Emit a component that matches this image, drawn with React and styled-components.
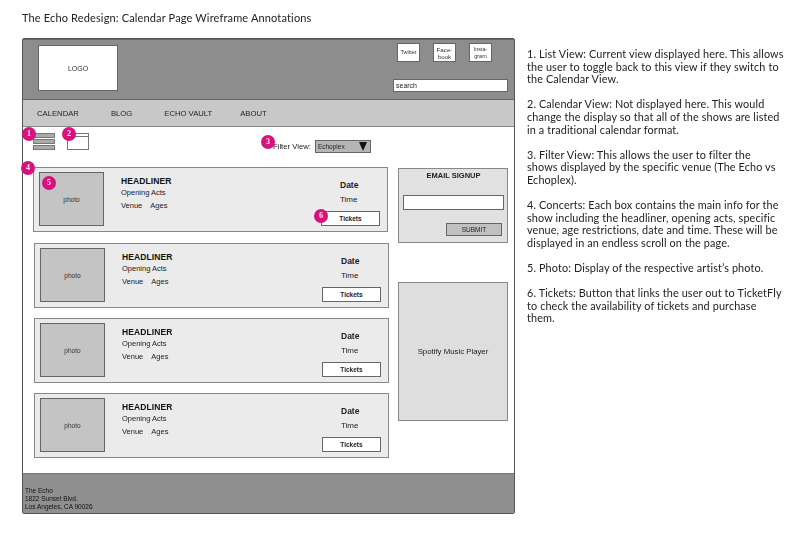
import React from "react";
import styled, { createGlobalStyle } from "styled-components";

const Global = createGlobalStyle`
  html, body { margin: 0; padding: 0; background: #fff; }
  body { width: 800px; height: 538px; overflow: hidden; font-family: "Liberation Sans", Arial, sans-serif; color: #222; }
  * { box-sizing: border-box; }
`;

const Page = styled.div`
  width: 800px; height: 538px;
  display: grid;
  grid-template-columns: 527px 273px;
  grid-template-rows: 38px 1fr;
  filter: blur(0.3px);
  will-change: filter;
`;
const Title = styled.h1`
  grid-column: 1 / 3;
  margin: 0; padding: 11px 0 0 22px;
  font: 400 11px/14px Lato, sans-serif;
  letter-spacing: 0.15px;
  color: #222;
`;
const Frame = styled.div`
  margin-left: 22px;
  width: 493px; height: 476px;
  border: 1px solid #555;
  border-radius: 2px;
  display: flex; flex-direction: column;
  background: #fff;
`;
const Header = styled.header`
  height: 61px;
  background: #8d8d8d;
  border-top: 1px solid #666;
  border-bottom: 1px solid #666;
  padding: 3px 6px 0 15px;
  display: flex; justify-content: space-between;
`;
const Logo = styled.div`
  width: 80px; height: 46px; margin-top: 2px;
  background: #fff;
  border: 1px solid #666;
  display: flex; align-items: center; justify-content: center;
  font-size: 7px; color: #333;
`;
const HeaderRight = styled.div`
  width: 115px;
  display: flex; flex-direction: column; justify-content: space-between;
  padding-bottom: 7px;
`;
const Socials = styled.div`
  display: flex; gap: 13px; padding-left: 4px;
`;
const Social = styled.div`
  width: 23px; height: 19px;
  background: #fff;
  border: 1px solid #666;
  display: flex; align-items: center; justify-content: center; text-align: center;
  font-size: ${p => p.$size || 5.5}px; line-height: 7px; color: #333;
`;
const Search = styled.div`
  height: 13px;
  background: #fff;
  border: 1px solid #666;
  padding-left: 2px;
  font-size: 7px; line-height: 11px; color: #222;
`;
const Nav = styled.nav`
  height: 27px;
  background: #c8c8c8;
  border-bottom: 1px solid #888;
  display: flex; align-items: center;
  padding-left: 14px;
  font-size: 7.7px; color: #222;
`;
const NavItem = styled.span`
  margin-right: ${p => p.$gap}px;
`;
const Main = styled.div`
  flex: 1;
  display: grid;
  grid-template-columns: 365px 1fr;
  grid-template-rows: 40px 1fr;
`;
const Tools = styled.div`
  grid-column: 1 / 3;
  position: relative;
  display: flex; align-items: flex-start;
  padding: 6px 0 0 10px;
`;
const ListIcon = styled.div`
  width: 22px;
  display: flex; flex-direction: column; gap: 1px;
`;
const ListBar = styled.div`
  height: 5px; background: #aaa; border: 1px solid #777;
`;
const CalIcon = styled.div`
  width: 22px; height: 17px; margin-left: 12px;
  border: 1px solid #777; background: #fff;
`;
const CalTop = styled.div`
  height: 3px; border-bottom: 1px solid #777;
`;
const FilterRow = styled.div`
  margin-left: 184px; margin-top: 7px;
  display: flex; align-items: center; gap: 4px;
  font-size: 7.7px; color: #222;
`;
const Select = styled.div`
  width: 56px; height: 13px;
  background: #b5b5b5;
  border: 1px solid #666;
  padding: 0 3px 0 2px;
  display: flex; align-items: center; justify-content: space-between;
  font-size: 6.5px; color: #222;
`;
const Arrow = styled.span`
  width: 0; height: 0;
  border-left: 4px solid transparent;
  border-right: 4px solid transparent;
  border-top: 9px solid #111;
`;
const Cards = styled.div`
  display: flex; flex-direction: column; gap: 10px;
  padding-left: 11px;
`;
const Card = styled.div`
  position: relative;
  width: 355px; height: 65px;
  background: #ebebeb;
  border: 1px solid #888;
  display: flex;
  padding: 4px 0 0 5px;
  &:first-child { margin: 0 0 1px -1px; }
`;
const Photo = styled.div`
  width: 65px; height: 54px;
  background: #c4c4c4;
  border: 1px solid #666;
  display: flex; align-items: center; justify-content: center;
  font-size: 6.5px; color: #333;
`;
const Info = styled.div`
  margin-left: 17px; margin-top: 4px;
  display: flex; flex-direction: column;
  width: 200px;
`;
const Headliner = styled.div`
  font-size: 8.5px; line-height: 11px; font-weight: 700; color: #111; letter-spacing: 0.1px;
`;
const Acts = styled.div`
  font-size: 7.5px; line-height: 11px; color: #222;
`;
const Meta = styled.div`
  font-size: 7.5px; line-height: 11px; margin-top: 2px; color: #222;
  display: flex; gap: 8px;
`;
const Right = styled.div`
  flex: 1;
  display: flex; flex-direction: column; align-items: flex-start;
  padding-top: 8px;
`;
const DateText = styled.div`
  margin-left: 19px;
  font-size: 8.5px; line-height: 11px; font-weight: 700; color: #222;
`;
const TimeText = styled.div`
  margin-left: 19px; margin-top: 3px;
  font-size: 8px; line-height: 11px; color: #222;
`;
const Tickets = styled.div`
  margin-top: 6px;
  width: 59px; height: 15px;
  background: #fff;
  border: 1px solid #666;
  display: flex; align-items: center; justify-content: center;
  font-size: 6.5px; font-weight: 700; color: #222;
`;
const Side = styled.aside`
  display: flex; flex-direction: column; gap: 39px;
  padding-left: 10px; padding-top: 1px;
`;
const Signup = styled.div`
  width: 110px; height: 75px;
  background: #e1e1e1;
  border: 1px solid #888;
  display: flex; flex-direction: column; align-items: center;
  padding: 2px 3px 0 4px;
`;
const SignupTitle = styled.div`
  font-size: 7.5px; line-height: 10px; font-weight: 700; color: #222;
`;
const EmailInput = styled.div`
  width: 101px; height: 15px; margin-top: 14px;
  background: #fff; border: 1px solid #666;
`;
const Submit = styled.div`
  width: 56px; height: 13px; margin-top: 13px; margin-right: 2px;
  align-self: flex-end;
  background: #c0c0c0; border: 1px solid #666;
  display: flex; align-items: center; justify-content: center;
  font-size: 6.5px; color: #222;
`;
const Spotify = styled.div`
  width: 110px; height: 139px;
  background: #dedede;
  border: 1px solid #888;
  display: flex; align-items: center; justify-content: center;
  font-size: 7.8px; color: #222;
`;
const Footer = styled.footer`
  height: 40px;
  background: #8f8f8f;
  border-top: 1px solid #777;
  padding: 13px 0 0 2px;
  font-size: 6.5px; line-height: 7.9px; color: #111;
`;
const Badge = styled.span`
  position: absolute;
  left: ${p => p.$x}px; top: ${p => p.$y}px;
  width: 14px; height: 14px; border-radius: 50%;
  background: #d6127d;
  color: #fbe0ee;
  display: flex; align-items: center; justify-content: center;
  font: 700 8px/1 "Liberation Serif", serif;
`;
const Notes = styled.div`
  padding-top: 10px;
  display: flex; flex-direction: column; gap: 12.6px;
`;
const Note = styled.p`
  margin: 0;
  font: 400 10.85px/12.6px Lato, sans-serif;
  letter-spacing: 0.12px;
  color: #222;
  white-space: pre-line;
`;

const NOTES = [
  "1. List View: Current view displayed here. This allows\nthe user to toggle back to this view if they switch to\nthe Calendar View.",
  "2. Calendar View: Not displayed here. This would\nchange the display so that all of the shows are listed\nin a traditional calendar format.",
  "3. Filter View: This allows the user to filter the\nshows displayed by the specific venue (The Echo vs\nEchoplex).",
  "4. Concerts: Each box contains the main info for the\nshow including the headliner, opening acts, specific\nvenue, age restrictions, date and time. These will be\ndisplayed in an endless scroll on the page.",
  "5. Photo: Display of the respective artist\u2019s photo.",
  "6. Tickets: Button that links the user out to TicketFly\nto check the availability of tickets and purchase\nthem.",
];

function ConcertCard({ first }) {
  return (
    <Card>
      {first && <Badge $x={-13} $y={-7}>4</Badge>}
      {first && <Badge $x={8} $y={8}>5</Badge>}
      <Photo>photo</Photo>
      <Info>
        <Headliner>HEADLINER</Headliner>
        <Acts>Opening Acts</Acts>
        <Meta><span>Venue</span><span>Ages</span></Meta>
      </Info>
      <Right>
        <DateText>Date</DateText>
        <TimeText>Time</TimeText>
        <Tickets>Tickets</Tickets>
      </Right>
      {first && <Badge $x={280} $y={41}>6</Badge>}
    </Card>
  );
}

export default function App() {
  return (
    <Page>
      <Global />
      <Title>The Echo Redesign: Calendar Page Wireframe Annotations</Title>
      <Frame>
        <Header>
          <Logo>LOGO</Logo>
          <HeaderRight>
            <Socials>
              <Social>Twitter</Social>
              <Social $size={6.2}>Face-<br />book</Social>
              <Social>Insta-<br />gram</Social>
            </Socials>
            <Search>search</Search>
          </HeaderRight>
        </Header>
        <Nav>
          <NavItem $gap={32}>CALENDAR</NavItem>
          <NavItem $gap={32}>BLOG</NavItem>
          <NavItem $gap={28}>ECHO VAULT</NavItem>
          <NavItem $gap={0}>ABOUT</NavItem>
        </Nav>
        <Main>
          <Tools>
            <ListIcon><ListBar /><ListBar /><ListBar /></ListIcon>
            <CalIcon><CalTop /></CalIcon>
            <FilterRow>
              <span>Filter View:</span>
              <Select>Echoplex<Arrow /></Select>
            </FilterRow>
            <Badge $x={-1} $y={0}>1</Badge>
            <Badge $x={39} $y={0}>2</Badge>
            <Badge $x={238} $y={8}>3</Badge>
          </Tools>
          <Cards>
            {[0, 1, 2, 3].map(i => <ConcertCard key={i} first={i === 0} />)}
          </Cards>
          <Side>
            <Signup>
              <SignupTitle>EMAIL SIGNUP</SignupTitle>
              <EmailInput />
              <Submit>SUBMIT</Submit>
            </Signup>
            <Spotify>Spotify Music Player</Spotify>
          </Side>
        </Main>
        <Footer>The Echo<br />1822 Sunset Blvd.<br />Los Angeles, CA 90026</Footer>
      </Frame>
      <Notes>
        {NOTES.map(n => <Note key={n}>{n}</Note>)}
      </Notes>
    </Page>
  );
}
